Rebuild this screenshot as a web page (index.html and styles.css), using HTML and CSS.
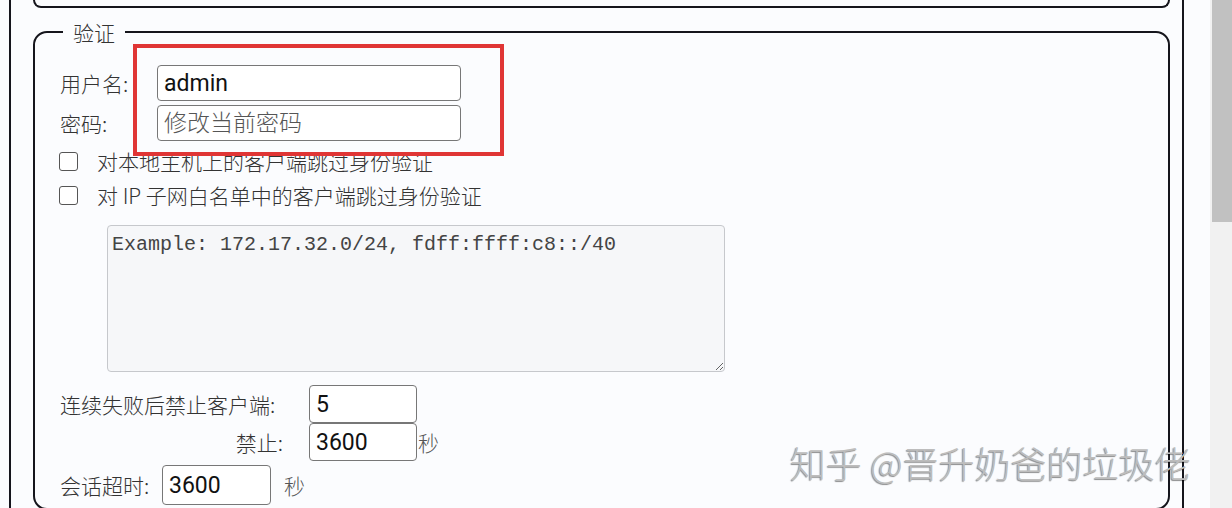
FILE: index.html
```html
<!DOCTYPE html>
<html lang="zh-CN">
<head>
    <meta charset="UTF-8">
    <meta name="viewport" content="width=device-width, initial-scale=1.0">
    <title>验证设置</title>
    <link rel="stylesheet" href="styles.css">
</head>
<body>
    <div class="page">
        <div class="frame">
            <div class="prev-box"></div>
            <fieldset class="group">
                <legend>验证</legend>
                <div class="cred">
                    <label>用户名:</label>
                    <input class="field" type="text" value="admin">
                    <label>密码:</label>
                    <input class="field" type="password" placeholder="修改当前密码">
                </div>
                <div class="mark"></div>

                <label class="check"><input type="checkbox"><span>对本地主机上的客户端跳过身份验证</span></label>
                <label class="check"><input type="checkbox"><span>对 IP 子网白名单中的客户端跳过身份验证</span></label>

                <textarea class="whitelist" placeholder="Example: 172.17.32.0/24, fdff:ffff:c8::/40"></textarea>

                <div class="ban">
                    <label class="ban-first">连续失败后禁止客户端:</label>
                    <input class="num" type="text" value="5">
                    <span></span>
                    <label class="ban-second">禁止:</label>
                    <input class="num" type="text" value="3600">
                    <span class="unit">秒</span>
                </div>
                <div class="session">
                    <label>会话超时:</label>
                    <input class="num" type="text" value="3600">
                    <span class="unit wide">秒</span>
                </div>
            </fieldset>
        </div>
        <div class="scrollbar"><div class="thumb"></div></div>
    </div>
    <div class="watermark">知乎 @晋升奶爸的垃圾佬</div>
</body>
</html>
```

FILE: styles.css
```css
body {
    margin: 0;
    background: #fbfcfe;
    font-family: 'Noto Sans CJK SC', 'Noto Sans', sans-serif;
    font-size: 21px;
    font-weight: 300;
    color: #333;
    overflow: hidden;
}
.page {
    display: flex;
    height: 508px;
}
.frame {
    box-sizing: border-box;
    margin-left: 9px;
    width: 1175px;
    height: 508px;
    border-left: 2px solid #15151c;
    border-right: 2px solid #15151c;
    padding: 0 12px 0 22px;
    flex-shrink: 0;
}
.prev-box {
    height: 6px;
    border: 2px solid #15151c;
    border-top: none;
    border-radius: 0 0 12px 12px;
}
.group {
    position: relative;
    margin: 9px 0 0 0;
    padding: 0 0 3px 25px;
    border: 2px solid #15151c;
    border-radius: 14px;
    min-width: 0;
}
.group legend {
    margin-left: 3px;
    padding: 0 10px;
    line-height: 30px;
    font-size: 21px;
    color: #333;
}
.cred {
    display: grid;
    grid-template-columns: 97px 304px;
    row-gap: 4px;
    align-items: center;
    margin-top: 18px;
}
.field,
.num {
    box-sizing: border-box;
    height: 36px;
    border: 1px solid #777;
    border-radius: 4px;
    padding: 0 6px;
    font-family: Roboto, 'Noto Sans CJK SC', sans-serif;
    font-size: 23px;
    font-weight: 400;
    color: #111;
    background: #fff;
}
.field::placeholder {
    color: #555;
    font-weight: 300;
}
.mark {
    position: absolute;
    left: 98px;
    top: -3px;
    width: 371px;
    height: 112px;
    box-sizing: border-box;
    border: 4px solid #e03535;
}
.check {
    display: flex;
    align-items: center;
    height: 30px;
    margin-top: 4px;
}
.check:first-of-type {
    margin-top: 5px;
}
.check input {
    appearance: none;
    width: 19px;
    height: 19px;
    margin: 0 19px 0 -1px;
    border: 1px solid #555;
    border-radius: 3px;
    background: #fff;
}
.whitelist {
    display: block;
    box-sizing: border-box;
    width: 618px;
    height: 147px;
    margin: 15px 0 0 47px;
    padding: 6px 4px;
    border: 1px solid #c6c8cc;
    border-radius: 4px;
    background: #f6f7f9;
    font-family: 'Liberation Mono', monospace;
    font-size: 20px;
    line-height: 26px;
    resize: both;
}
.whitelist::placeholder {
    color: #444;
}
.ban {
    display: grid;
    grid-template-columns: 249px 108px auto;
    align-items: center;
    margin-top: 13px;
}
.ban .num {
    height: 38px;
}
.ban-first {
    justify-self: start;
}
.ban-second {
    justify-self: end;
    padding-right: 26px;
}
.unit {
    margin-left: 1px;
    color: #555;
}
.session {
    display: flex;
    align-items: center;
    margin-top: 4px;
}
.session label {
    width: 102px;
}
.session .num {
    width: 109px;
    height: 40px;
}
.unit.wide {
    margin-left: 13px;
}
.scrollbar {
    margin-left: 26px;
    width: 22px;
    background: #f1f1f1;
}
.thumb {
    height: 222px;
    margin-left: 2px;
    background: #c1c1c1;
}
.watermark {
    position: absolute;
    left: 790px;
    top: 436px;
    font-size: 36px;
    font-weight: 300;
    color: #bdbdbd;
    text-shadow: -1px 1px 1px rgba(0, 0, 0, 0.45);
    white-space: nowrap;
}
```
